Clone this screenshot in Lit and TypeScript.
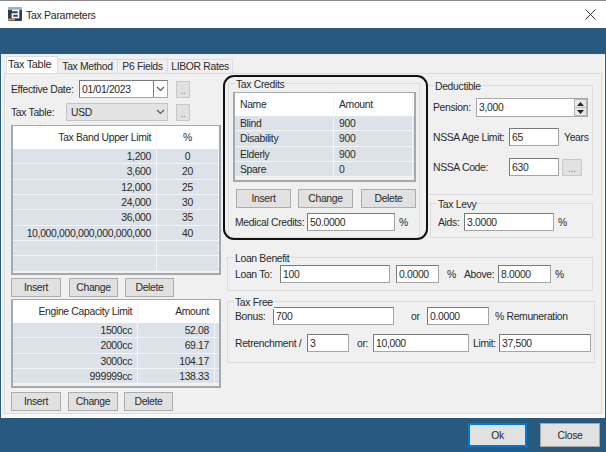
import { LitElement, html, css } from 'lit';
import { customElement } from 'lit/decorators.js';

const bands = [
   ['1,200', '0'], ['3,600', '20'], ['12,000', '25'], ['24,000', '30'],
   ['36,000', '35'], ['10,000,000,000,000,000,000', '40'], ['', ''], ['', ''],
];
const engines = [
   ['1500cc', '52.08'], ['2000cc', '69.17'], ['3000cc', '104.17'], ['999999cc', '138.33'],
];
const credits = [
   ['Blind', '900'], ['Disability', '900'], ['Elderly', '900'], ['Spare', '0'],
];

@customElement('app-root')
export class AppRoot extends LitElement {
   static styles = css`
   :host {
      display: block;
      width: 606px;
      height: 452px;
      overflow: hidden;
      position: relative;
      box-sizing: border-box;
      background: #285a80;
      font-family: 'Liberation Sans', Arial, sans-serif;
      font-size: 10.4px;
      letter-spacing: -0.33px;
      color: #2a2a2a;
   }
   .titlebar {
      height: 27px;
      border-top: 1px solid #8a8a8a;
      background: #fff;
      display: flex;
      align-items: center;
      padding: 0 10px 0 8px;
      font-size: 10.6px;
      gap: 3px;
   }
   .titlebar .name { flex: 1; }
   .band { height: 26px; background: #285a80; }
   .body {
      height: 364px;
      box-sizing: border-box;
      background: #f0f0f0;
      margin-left: 1px;
      margin-right: 1px;
      padding: 2px 2px 0 2px;
      border-left: 1px solid #fff;
      border-right: 1px solid #fff;
      border-bottom: 4px solid #fafafa;
      display: flex;
      flex-direction: column;
   }
   .tabs { display: flex; height: 17px; padding-left: 2px; align-items: flex-end; }
   .tab {
      box-sizing: border-box;
      height: 14px;
      line-height: 13px;
      text-align: center;
      white-space: nowrap;
      background: #f0f0f0;
      border: 1px solid #dcdcdc;
      border-bottom: none;
      margin-right: -1px;
   }
   .tab.active {
      height: 17px;
      line-height: 15px;
      background: #fff;
      position: relative;
      z-index: 1;
      text-align: left;
      padding-left: 1px;
      font-size: 11px;
   }
   .pane {
      flex: 1;
      border: 1px solid #dcdcdc;
      padding: 6px 0 0 6px;
      display: flex;
      gap: 6px;
   }
   .left { width: 210px; display: flex; flex-direction: column; flex: none; }
   .right { width: 368px; flex: none; display: flex; flex-direction: column; }
   .top { display: flex; gap: 7px; height: 177px; }
   .row { display: flex; align-items: center; }
   .input, .combo {
      box-sizing: border-box;
      height: 18px;
      border: 1px solid #7a7a7a;
      border-right-color: #a5a5a5;
      border-bottom-color: #a5a5a5;
      background: #fff;
      line-height: 17px;
      padding-left: 2px;
      flex: none;
      white-space: nowrap;
      overflow: hidden;
   }
   .combo { display: flex; justify-content: space-between; padding-right: 0; }
   .combo.off { background: #e3e3e3; border-color: #c4c4c4; padding-left: 4px; }
   .chev { width: 13px; display: flex; align-items: center; justify-content: center; border-left: 1px solid #7a7a7a; }
   .off .chev { border-left: none; }
   .btn {
      box-sizing: border-box;
      border: 1px solid #adadad;
      background: #e1e1e1;
      display: flex;
      align-items: center;
      justify-content: center;
      flex: none;
      height: 19px;
   }
   .dots { width: 14px; height: 17px; border-color: #c8c8c8; color: #888; padding-top: 3px; }
   .grid {
      box-sizing: border-box;
      border: 1px solid #a3a9ad;
      border-width: 1px 2px 2px 2px;
      background: #f0f0f0;
      overflow: hidden;
      flex: none;
   }
   .grid .tr { display: flex; height: 15.35px; border-bottom: 1px solid #f2f4f6; box-sizing: border-box; background: #dce2e7; line-height: 15px; }
   .grid .tr.head { background: #fff; border: none; height: 23px; line-height: 23px; }
   .grid .td { box-sizing: border-box; padding: 0 5px; border-right: 1px solid #f2f4f6; flex: none; overflow: hidden; white-space: nowrap; }
   .r { text-align: right; }
   .c { text-align: center; }
   .btns { display: flex; }
   .group {
      border: 1px solid #dcdcdc;
      position: relative;
      box-sizing: border-box;
   }
   .legend {
      position: absolute;
      top: -6px;
      left: 6px;
      background: #f0f0f0;
      padding: 0 1px;
      line-height: 13px;
   }
   .credits {
      width: 192px;
      height: 155px;
      margin: 3px 0 0 1px;
      padding: 8px 0 0 4px;
   }
   .ring {
      position: absolute;
      left: 223px;
      top: 75px;
      width: 205px;
      height: 165px;
      box-sizing: border-box;
      border: 2px solid #111;
      border-radius: 11px;
      pointer-events: none;
   }
   .side { display: flex; flex-direction: column; width: 166px; margin-top: 5px; }
   .deduct { height: 110px; padding: 12px 0 0 5px; }
   .levy { height: 35px; width: 163px; margin: 8px 0 0 3px; padding: 9px 0 0 7px; }
   .loan { height: 34px; width: 366px; padding: 7px 0 0 7px; }
   .free { height: 62px; width: 368px; margin-top: 10px; padding: 5px 0 0 7px; }
   .pension { width: 112px; height: 19px; display: flex; border: 1px solid #a8a8a8; }
   .spin {
      width: 13px; height: 17px; display: flex; flex-direction: column;
      margin-left: auto;
   }
   .spin div { flex: 1; background: #e8e8e8; display: flex; align-items: center; justify-content: center; border: 1px solid #b8b8b8; border-top: none; }
   .spin div:first-child { border-top: 1px solid #b8b8b8; }
   .footer { height: 34px; display: flex; justify-content: flex-end; gap: 13px; padding: 5px 6px 0 0; box-sizing: border-box; }
   .footer .btn { height: 24px; width: 60px; border-color: #a8a8a8; background: #e1e1e1; }
   .footer .ok { width: 59px; border: 2px solid #0078d7; }
   `;

   grid(rows: string[][], heads: string[], widths: number[], align: string[]) {
      return html`
         <div class="tr head">
            ${heads.map((h, i) => html`<div class="td ${align[i]}" style="width:${widths[i]}px">${h}</div>`)}
         </div>
         ${rows.map(row => html`
            <div class="tr">
               ${row.map((v, i) => html`<div class="td ${align[i]}" style="width:${widths[i]}px">${v}</div>`)}
            </div>
         `)}
      `;
   }

   chevron() {
      return html`<svg width="9" height="6" viewBox="0 0 9 6"><path d="M1 1l3.5 3.5L8 1" fill="none" stroke="#555" stroke-width="1.1"/></svg>`;
   }

   // width and left margin per control, since the form is a fixed dialog
   input(v: string, w: number, ml = 0) {
      return html`<div class="input" style="width:${w}px;margin-left:${ml}px">${v}</div>`;
   }

   label(t: string, w: number) {
      return html`<span style="width:${w}px;flex:none;white-space:nowrap">${t}</span>`;
   }

   buttons(widths: number[], gaps: number[]) {
      return html`<div class="btns">
         ${['Insert', 'Change', 'Delete'].map((t, i) => html`
            <div class="btn" style="width:${widths[i]}px;margin-left:${gaps[i]}px">${t}</div>`)}
      </div>`;
   }

   render() {
      return html`
         <div class="titlebar">
            <svg width="15" height="15" viewBox="0 0 15 15">
               <rect x="0" y="0" width="14" height="14" rx="1" fill="#2b3f55"/>
               <rect x="0" y="0" width="14" height="3" fill="#8fb4d4"/>
               <path d="M0 12.500h7" stroke="#e8912e" stroke-width="2"/>
               <path d="M4 3.500h6.500v3.500H4.500v3.500h6V7" fill="none" stroke="#fff" stroke-width="1.600"/>
            </svg>
            <span class="name">Tax Parameters</span>
            <svg width="11" height="11" viewBox="0 0 11 11"><path d="M.5.5l10 10M10.500.5l-10 10" stroke="#333" stroke-width="1" fill="none"/></svg>
         </div>
         <div class="band"></div>
         <div class="body">
            <div class="tabs">
               <div class="tab active" style="width:52px">Tax Table</div>
               <div class="tab" style="width:61px">Tax Method</div>
               <div class="tab" style="width:51px">P6 Fields</div>
               <div class="tab" style="width:66px">LIBOR Rates</div>
            </div>
            <div class="pane">
               <div class="left">
                  <div class="row" style="height:18px">
                     ${this.label('Effective Date:', 68)}
                     <div class="combo" style="width:89px"><span>01/01/2023</span><span class="chev">${this.chevron()}</span></div>
                     <div class="btn dots" style="margin-left:8px">..</div>
                  </div>
                  <div class="row" style="height:18px;margin-top:5px">
                     ${this.label('Tax Table:', 55)}
                     <div class="combo off" style="width:102px"><span>USD</span><span class="chev">${this.chevron()}</span></div>
                     <div class="btn dots" style="margin-left:8px">..</div>
                  </div>
                  <div class="grid" style="width:210px;height:150px;margin-top:4px">
                     ${this.grid(bands, ['Tax Band Upper Limit', '%'], [144, 62], ['r', 'c'])}
                  </div>
                  <div style="margin-top:3px">${this.buttons([50, 49, 49], [0, 8, 7])}</div>
                  <div class="grid" style="width:210px;height:89px;margin-top:2px">
                     ${this.grid(engines, ['Engine Capacity Limit', 'Amount'], [125, 77], ['r', 'r'])}
                  </div>
                  <div style="margin-top:4px">${this.buttons([50, 50, 49], [0, 7, 6])}</div>
               </div>
               <div class="right">
                  <div class="top">
                     <div class="group credits">
                        <span class="legend">Tax Credits</span>
                        <div class="grid" style="width:183px;height:90px">
                           ${this.grid(credits, ['Name', 'Amount'], [99, 79], ['', ''])}
                        </div>
                        <div style="margin-top:7px">${this.buttons([55, 55, 55], [3, 7, 8])}</div>
                        <div class="row" style="margin-top:5px;padding-left:2px">
                           ${this.label('Medical Credits:', 72)}
                           ${this.input('50.0000', 88)}
                           <span style="margin-left:4px">%</span>
                        </div>
                     </div>
                     <div class="side">
                        <div class="group deduct">
                           <span class="legend">Deductible</span>
                           <div class="row">
                              ${this.label('Pension:', 43)}
                              <div class="input pension">
                                 <span>3,000</span>
                                 <span class="spin">
                                    <div><svg width="7" height="4" viewBox="0 0 7 4"><path d="M3.500 0L7 4H0z" fill="#222"/></svg></div>
                                    <div><svg width="7" height="4" viewBox="0 0 7 4"><path d="M0 0h7L3.500 4z" fill="#222"/></svg></div>
                                 </span>
                              </div>
                           </div>
                           <div class="row" style="margin-top:11px">
                              ${this.label('NSSA Age Limit:', 76)}
                              ${this.input('65', 50)}
                              <span style="margin-left:5px">Years</span>
                           </div>
                           <div class="row" style="margin-top:12px">
                              ${this.label('NSSA Code:', 76)}
                              ${this.input('630', 50)}
                              <div class="btn dots" style="width:20px;margin-left:3px">...</div>
                           </div>
                        </div>
                        <div class="group levy">
                           <span class="legend">Tax Levy</span>
                           <div class="row">
                              ${this.label('Aids:', 26)}
                              ${this.input('3.0000', 90)}
                              <span style="margin-left:4px">%</span>
                           </div>
                        </div>
                     </div>
                  </div>
                  <div class="group loan">
                     <span class="legend">Loan Benefit</span>
                     <div class="row">
                        ${this.label('Loan To:', 45)}
                        ${this.input('100', 110)}
                        ${this.input('0.0000', 43, 6)}
                        <span style="margin-left:8px;width:17px">%</span>
                        ${this.label('Above:', 34)}
                        ${this.input('8.0000', 53)}
                        <span style="margin-left:4px">%</span>
                     </div>
                  </div>
                  <div class="group free">
                     <span class="legend">Tax Free</span>
                     <div class="row">
                        ${this.label('Bonus:', 38)}
                        ${this.input('700', 121)}
                        <span style="margin-left:17px;width:16px">or</span>
                        ${this.input('0.0000', 62)}
                        <span style="margin-left:6px">% Remuneration</span>
                     </div>
                     <div class="row" style="margin-top:9px">
                        ${this.label('Retrenchment /', 72)}
                        ${this.input('3', 42)}
                        <span style="margin-left:8px;width:16px">or:</span>
                        ${this.input('10,000', 96)}
                        <span style="margin-left:4px;width:26px">Limit:</span>
                        ${this.input('37,500', 92)}
                     </div>
                  </div>
               </div>
            </div>
         </div>
         <div class="footer">
            <div class="btn ok">Ok</div>
            <div class="btn">Close</div>
         </div>
         <div class="ring"></div>
      `;
   }
}
